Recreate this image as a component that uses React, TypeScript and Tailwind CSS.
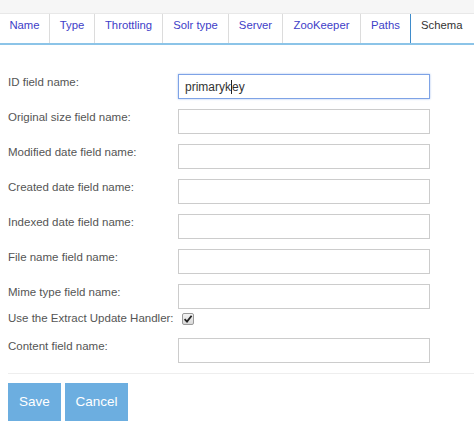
import React from "react";

const tabs: { label: string; w: string }[] = [
  { label: "Name", w: "w-[50px]" },
  { label: "Type", w: "w-[45px]" },
  { label: "Throttling", w: "w-[68px]" },
  { label: "Solr type", w: "w-[66px]" },
  { label: "Server", w: "w-[54px]" },
  { label: "ZooKeeper", w: "w-[78px]" },
];

const fields = [
  "ID field name:",
  "Original size field name:",
  "Modified date field name:",
  "Created date field name:",
  "Indexed date field name:",
  "File name field name:",
  "Mime type field name:",
];

function Row({ label, children }: { label: string; children: React.ReactNode }) {
  return (
    <div className="flex items-start">
      <div className="w-[170px] shrink-0 text-[11.5px] leading-[16px] text-[#555]">{label}</div>
      {children}
    </div>
  );
}

function TextInput({ value, focused }: { value?: string; focused?: boolean }) {
  return (
    <div
      className={
        focused
          ? "w-[252px] h-[25px] border border-[#7ea3e6] shadow-[0_0_2px_#a9c2f0] bg-white flex items-center pl-[6px] text-[12px] text-[#333]"
          : "w-[252px] h-[25px] border border-[#cccccc] bg-white"
      }
    >
      {value ? (
        <span className="flex items-center">
          <span>primaryk</span>
          <span className="inline-block w-[1px] h-[14px] bg-[#222]"></span>
          <span>ey</span>
        </span>
      ) : null}
    </div>
  );
}

export default function App() {
  return (
    <div className="w-[474px] h-[428px] bg-white overflow-hidden" style={{ fontFamily: '"Liberation Sans", Arial, sans-serif' }}>
      <div className="h-[14px] bg-[#f6f6f6] border-b border-[#e8e8e8]"></div>
      <div className="flex h-[31px] border-b-2 border-[#8cc4e8]">
        {tabs.map((t) => (
          <div
            key={t.label}
            className={`${t.w} shrink-0 border-r border-[#dcdcdc] text-center pt-[4px] text-[11.3px] leading-[14px] text-[#4040c8]`}
          >
            {t.label}
          </div>
        ))}
        <div className="w-[49px] shrink-0 text-center pt-[4px] text-[11.3px] leading-[14px] text-[#4040c8]">Paths</div>
        <div className="flex-1 border-l border-[#3f8ccb] pl-[10px] pt-[4px] text-[11.3px] leading-[14px] text-[#333]">Schema</div>
      </div>

      <div className="pt-[29px] pl-[8px]">
        <div className="flex flex-col gap-[10px]">
          {fields.map((f, i) => (
            <Row key={f} label={f}>
              <TextInput value={i === 0 ? "primarykey" : undefined} focused={i === 0} />
            </Row>
          ))}
        </div>
        <div className="flex items-start h-[18px] mt-[1px]">
          <div className="w-[170px] shrink-0 text-[11.5px] leading-[16px] text-[#555]">Use the Extract Update Handler:</div>
          <div className="ml-[4px] mt-[3px] w-[12px] h-[12px] rounded-[2px] border border-[#9a9a9a] bg-gradient-to-b from-[#f4f4f4] to-[#d8d8d8] flex items-center justify-center">
            <svg width="10" height="10" viewBox="0 0 10 10">
              <path d="M1.6 5.2 L4 7.6 L8.6 1.8" fill="none" stroke="#222" strokeWidth="1.8" />
            </svg>
          </div>
        </div>
        <div className="mt-[10px]">
          <Row label="Content field name:">
            <TextInput />
          </Row>
        </div>
        <div className="mt-[10px] h-[1px] bg-[#eeeeee]"></div>
        <div className="mt-[9px] flex gap-[4px]">
          <div className="w-[53px] h-[38px] bg-[#6caee0] text-white text-[13.5px] flex items-center justify-center">Save</div>
          <div className="w-[63px] h-[38px] bg-[#6caee0] text-white text-[13.5px] flex items-center justify-center">Cancel</div>
        </div>
      </div>
    </div>
  );
}
